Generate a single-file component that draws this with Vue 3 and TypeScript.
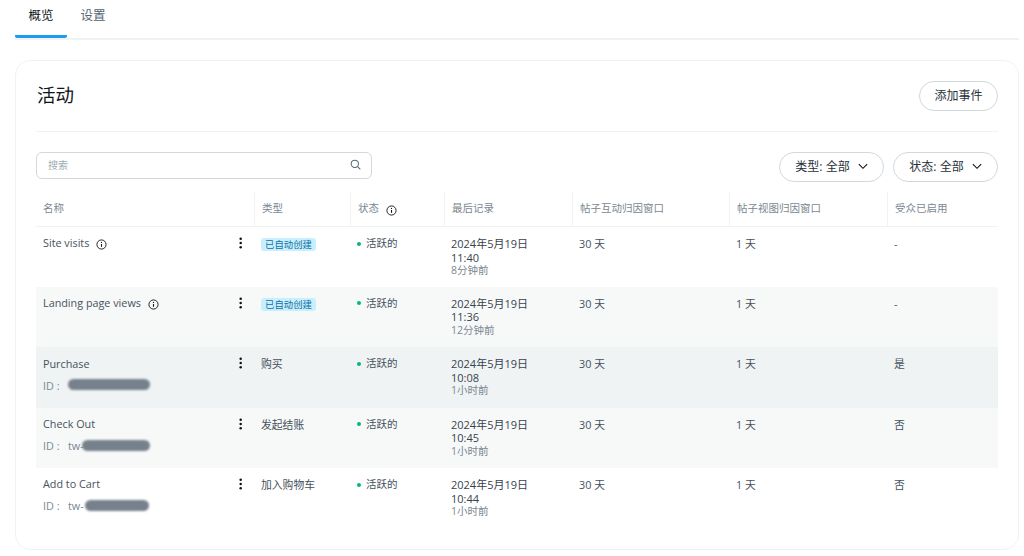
<script setup lang="ts">
interface Row {
  name: string
  info?: boolean
  idPrefix?: string
  blurWidth?: number
  blurOffset?: number
  type: string
  auto?: boolean
  time: string
  ago: string
  audience: string
  tone: string
}

const columns = ['类型', '状态', '最后记录', '帖子互动归因窗口', '帖子视图归因窗口', '受众已启用']

const rows: Row[] = [
  { name: 'Site visits', info: true, type: '已自动创建', auto: true, time: '11:40', ago: '8分钟前', audience: '-', tone: 'white' },
  { name: 'Landing page views', info: true, type: '已自动创建', auto: true, time: '11:36', ago: '12分钟前', audience: '-', tone: 'light' },
  { name: 'Purchase', idPrefix: '', blurWidth: 82, blurOffset: 0, type: '购买', time: '10:08', ago: '1小时前', audience: '是', tone: 'mid' },
  { name: 'Check Out', idPrefix: 'tw-', blurWidth: 68, blurOffset: 14, type: '发起结账', time: '10:45', ago: '1小时前', audience: '否', tone: 'light' },
  { name: 'Add to Cart', idPrefix: 'tw-', blurWidth: 64, blurOffset: 17, type: '加入购物车', time: '10:44', ago: '1小时前', audience: '否', tone: 'white' },
]
</script>

<template>
  <div class="page">
    <nav class="tabs">
      <div class="tab active">概览</div>
      <div class="tab">设置</div>
    </nav>

    <section class="card">
      <header class="head">
        <h1>活动</h1>
        <button class="pill add">添加事件</button>
      </header>

      <div class="tools">
        <div class="search">
          <span>搜索</span>
          <svg viewBox="0 0 24 24" width="11" height="11" fill="none" stroke="#536471" stroke-width="2.2" stroke-linecap="round">
            <circle cx="10.5" cy="10.5" r="8" />
            <path d="M16.5 16.5 22 22" />
          </svg>
        </div>
        <div class="filters">
          <button class="pill filter">
            类型: 全部
            <svg viewBox="0 0 12 8" width="10" height="7" fill="none" stroke="#0f1419" stroke-width="1.3"><path d="M1 1.2 6 6.2l5-5" /></svg>
          </button>
          <button class="pill filter">
            状态: 全部
            <svg viewBox="0 0 12 8" width="10" height="7" fill="none" stroke="#0f1419" stroke-width="1.3"><path d="M1 1.2 6 6.2l5-5" /></svg>
          </button>
        </div>
      </div>

      <table>
        <colgroup>
          <col class="c1" /><col class="c2" /><col class="c3" /><col class="c4" /><col class="c5" /><col class="c6" /><col class="c7" />
        </colgroup>
        <thead>
          <tr>
            <th><span class="th-in">名称</span></th>
            <th v-for="c in columns" :key="c">
              <span class="th-in">
                {{ c }}
                <svg v-if="c === '状态'" class="info raised" viewBox="0 0 24 24" fill="none" stroke="#0f1419" stroke-width="2"><circle cx="12" cy="12" r="10" /><path d="M12 11v6" stroke-width="2.4" /><circle cx="12" cy="7.5" r="1.3" fill="#0f1419" stroke="none" /></svg>
              </span>
            </th>
          </tr>
        </thead>
        <tbody>
          <tr v-for="r in rows" :key="r.name" :class="r.tone">
            <td>
              <div class="name-cell">
                <div>
                  <div class="name">
                    {{ r.name }}
                    <svg v-if="r.info" class="info" viewBox="0 0 24 24" fill="none" stroke="#0f1419" stroke-width="2"><circle cx="12" cy="12" r="10" /><path d="M12 11v6" stroke-width="2.4" /><circle cx="12" cy="7.5" r="1.3" fill="#0f1419" stroke="none" /></svg>
                  </div>
                  <div v-if="r.blurWidth" class="id">
                    <span class="id-label">ID :</span>
                    <span class="id-value">
                      {{ r.idPrefix }}
                      <span class="blur" :style="{ width: r.blurWidth + 'px', left: r.blurOffset + 'px' }"></span>
                    </span>
                  </div>
                </div>
                <svg class="dots" viewBox="0 0 4 14" width="3.4" height="12" fill="#0f1419"><circle cx="2" cy="2" r="1.5" /><circle cx="2" cy="7" r="1.5" /><circle cx="2" cy="12" r="1.5" /></svg>
              </div>
            </td>
            <td><span v-if="r.auto" class="badge">{{ r.type }}</span><template v-else>{{ r.type }}</template></td>
            <td><i class="dot"></i>活跃的</td>
            <td class="date">2024年5月19日<br />{{ r.time }}<div class="ago">{{ r.ago }}</div></td>
            <td>30 天</td>
            <td>1 天</td>
            <td>{{ r.audience }}</td>
          </tr>
        </tbody>
      </table>
    </section>
  </div>
</template>

<style>
html, body { margin: 0; background: #fff; }
</style>

<style scoped>
.page {
  width: 1024px;
  height: 556px;
  box-sizing: border-box;
  padding: 0 5px 0 15px;
  overflow: hidden;
  font-family: "Open Sans", "Noto Sans CJK SC", sans-serif;
  color: #0f1419;
}
.tabs {
  display: flex;
  height: 38px;
  border-bottom: 2px solid #f0f3f4;
}
.tab {
  width: 52px;
  height: 38px;
  box-sizing: border-box;
  padding-top: 7px;
  text-align: center;
  font-size: 12.5px;
  line-height: 17px;
  color: #536471;
}
.tab.active {
  color: #0f1419;
  border-bottom: 3px solid #1d9bf0;
  border-radius: 2px;
}
.card {
  margin-top: 20px;
  height: 490px;
  box-sizing: border-box;
  border: 1px solid #eff3f4;
  border-radius: 15px;
  padding: 0 20px;
}
.head {
  display: flex;
  align-items: center;
  justify-content: space-between;
  height: 70px;
  border-bottom: 1px solid #eff3f4;
}
h1 {
  margin: 0 0 3px 1px;
  font-size: 18.5px;
  font-weight: 400;
  line-height: 24px;
}
.pill {
  font: inherit;
  color: #0f1419;
  background: #fff;
  border: 1px solid #cfd9de;
  border-radius: 16px;
  cursor: pointer;
}
.add {
  width: 79px;
  height: 30px;
  padding: 0 0 2px;
  font-size: 12px;
  color: #26313a;
}
.tools {
  display: flex;
  justify-content: space-between;
  margin-top: 20px;
  height: 40px;
}
.search {
  width: 336px;
  height: 26.5px;
  box-sizing: border-box;
  border: 1px solid #cfd9de;
  border-radius: 6px;
  padding: 0 10px 1px 11px;
  display: flex;
  align-items: center;
  justify-content: space-between;
  font-size: 10px;
  color: #a0aab3;
}
.filters { display: flex; gap: 9px; }
.filter {
  width: 105px;
  height: 30px;
  padding: 0 0 2px;
  display: flex;
  align-items: center;
  justify-content: center;
  gap: 8px;
  font-size: 12px;
  color: #26313a;
}
table {
  width: 962px;
  border-collapse: collapse;
  table-layout: fixed;
  font-size: 10.8px;
  line-height: 13.5px;
  color: #46525c;
}
.c1 { width: 218px; }
.c2 { width: 96px; }
.c3 { width: 94px; }
.c4 { width: 128px; }
.c5 { width: 157px; }
.c6 { width: 158px; }
.c7 { width: 111px; }
th {
  height: 34px;
  padding: 0;
  font-weight: 400;
  font-size: 10.5px;
  text-align: left;
  color: #7b8791;
  border-bottom: 1px solid #eff3f4;
}
.th-in {
  display: flex;
  align-items: center;
  gap: 7px;
  height: 34px;
  padding-left: 7px;
}
th + th .th-in { border-left: 1px solid #eff3f4; }
td {
  height: 60.4px;
  box-sizing: border-box;
  padding: 10px 7px 0;
  vertical-align: top;
}
tr.light td { background: #f7f9f9; }
tr.mid td { background: #eff3f4; }
.name-cell {
  display: flex;
  justify-content: space-between;
  align-items: flex-start;
  padding-right: 4.5px;
}
.name {
  display: flex;
  align-items: center;
  gap: 7px;
  height: 14px;
  margin-top: -1px;
}
.info { width: 11px; height: 11px; margin-top: 3px; flex: none; }
.info.raised { margin-top: 3px; }
.id {
  display: flex;
  align-items: center;
  height: 14px;
  margin-top: 8px;
  color: #7b8791;
}
.id-label { width: 25px; flex: none; }
.id-value { position: relative; display: block; height: 14px; min-width: 1px; }
.blur {
  position: absolute;
  top: 1px;
  left: 0;
  height: 11px;
  border-radius: 6px;
  background: #76818c;
  filter: blur(1.2px);
}
.dots { margin-top: 0; }
.badge {
  display: inline-block;
  padding: 0 4px;
  border-radius: 3px;
  font-size: 9.4px;
  line-height: 13px;
  color: #0f6fa8;
  background: #c9effc;
}
.dot {
  display: inline-block;
  width: 4px;
  height: 4px;
  margin-right: 5px;
  vertical-align: 1.5px;
  border-radius: 50%;
  background: #00ba7c;
}
td:nth-child(3) { font-size: 10.5px; }
.date { font-size: 11px; color: #37434d; }
.ago { font-size: 10.5px; color: #7b8791; }
</style>
